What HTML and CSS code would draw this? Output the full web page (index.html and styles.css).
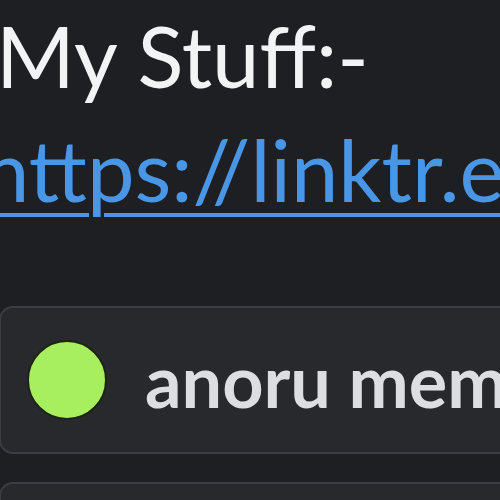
FILE: index.html
```html
<!DOCTYPE html>
<html lang="en">
<head>
  <meta charset="UTF-8" />
  <title>Profile</title>
  <link rel="stylesheet" href="styles.css">
</head>
<body>
  <div class="bio">
    <p class="bio-line title-line">My Stuff:-</p>
    <p class="bio-line link-line"><a href="#">https://linktr.ee/anoru</a></p>
  </div>

  <div class="cards">
    <div class="card">
      <span class="dot"></span>
      <span class="card-name">anoru memes</span>
    </div>
    <div class="card"></div>
  </div>
</body>
</html>
```

FILE: styles.css
```css
body {
  margin: 0;
  height: 500px;
  overflow: hidden;
  background: #1e1f22;
  font-family: Lato, sans-serif;
}

.bio {
  margin-top: -2px;
  font-size: 85px;
  line-height: 114px;
  color: #f2f3f5;
  white-space: nowrap;
}

.bio-line {
  margin: 0;
}

.title-line {
  margin-left: -4px;
}

.link-line {
  margin-left: -18px;
}

.link-line a {
  color: #4a96e6;
  text-decoration: underline;
  text-decoration-thickness: 4px;
  text-underline-offset: 11px;
}

.cards {
  margin-top: 80px;
  margin-left: -1px;
  display: flex;
  flex-direction: column;
  gap: 28px;
}

.card {
  height: 144px;
  display: flex;
  align-items: center;
  gap: 38px;
  padding-left: 26px;
  background: #28292d;
  border: 2px solid #3a3c41;
  border-right: none;
  border-radius: 14px 0 0 14px;
  white-space: nowrap;
}

.dot {
  flex: none;
  width: 76px;
  height: 76px;
  border-radius: 50%;
  background: #a8ef5f;
  border: 2px solid #1d2416;
}

.card-name {
  font-size: 72px;
  font-weight: 700;
  color: #dcdee2;
}
```
